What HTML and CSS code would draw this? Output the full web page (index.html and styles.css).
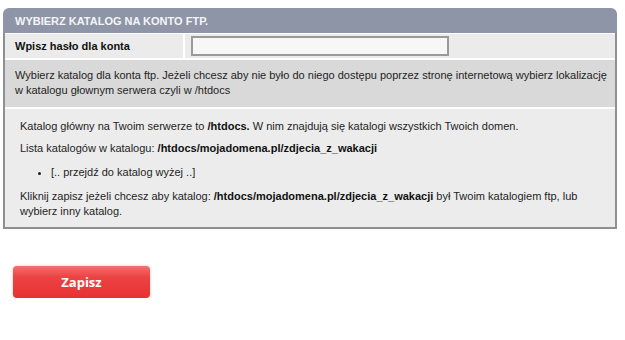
FILE: index.html
```html
<!DOCTYPE html>
<html lang="pl">
<head>
<meta charset="utf-8">
<link rel="stylesheet" href="styles.css">
</head>
<body>
<div class="panel">
  <div class="panel-head">WYBIERZ KATALOG NA KONTO FTP.</div>
  <div class="panel-body">
    <div class="row-pass">
      <div class="cell-label">Wpisz hasło dla konta</div>
      <div class="cell-input"><input class="pass-input" type="text"></div>
    </div>
    <div class="row-info">Wybierz katalog dla konta ftp. Jeżeli chcesz aby nie było do niego dostępu poprzez stronę internetową wybierz lokalizację w katalogu głownym serwera czyli w /htdocs</div>
    <div class="row-dirs">
      <p class="para">Katalog główny na Twoim serwerze to <b>/htdocs.</b> W nim znajdują się katalogi wszystkich Twoich domen.</p>
      <p class="para">Lista katalogów w katalogu: <b>/htdocs/mojadomena.pl/zdjecia_z_wakacji</b></p>
      <ul class="dir-list">
        <li>[.. przejdź do katalog wyżej ..]</li>
      </ul>
      <p class="para para-last">Kliknij zapisz jeżeli chcesz aby katalog: <b>/htdocs/mojadomena.pl/zdjecia_z_wakacji</b> był Twoim katalogiem ftp, lub wybierz inny katalog.</p>
    </div>
  </div>
</div>
<div class="actions">
  <button class="btn-save" type="button">Zapisz</button>
</div>
</body>
</html>
```

FILE: styles.css
```css
html, body {
  margin: 0;
  padding: 0;
  background: #ffffff;
}
body {
  font-family: "Liberation Sans", Arial, sans-serif;
  font-size: 11px;
  color: #1a1a1a;
}
.panel {
  margin: 8px 8px 0 3px;
  width: 614px;
}
.panel-head {
  height: 25px;
  line-height: 26px;
  background: #8e95a6;
  border-radius: 6px 6px 0 0;
  color: #f4f5f8;
  font-weight: bold;
  font-size: 11px;
  padding-left: 12px;
}
.panel-body {
  border: 2px solid #8f8f8f;
  border-top: none;
  background: #ffffff;
  display: flex;
  flex-direction: column;
  gap: 2px;
  padding-top: 1px;
}
.row-pass {
  display: flex;
  gap: 2px;
  height: 24px;
}
.cell-label {
  width: 168px;
  background: #ebebeb;
  font-weight: bold;
  color: #111;
  padding-left: 10px;
  line-height: 24px;
}
.cell-input {
  flex: 1;
  background: #ebebeb;
  display: flex;
  align-items: center;
  padding-left: 6px;
}
.pass-input {
  box-sizing: border-box;
  width: 258px;
  height: 20px;
  border: 2px solid #9a9a9a;
  background: #f7f7f7;
  margin: 0;
  padding: 0;
}
.row-info {
  background: #d9d9d9;
  padding: 8px 2px 9px 10px;
  line-height: 15px;
  color: #1e1e1e;
}
.row-dirs {
  background: #ececec;
  padding: 10px 15px 8px 15px;
  line-height: 15px;
  color: #1e1e1e;
}
.para {
  margin: 0 0 7px 0;
}
.para-last {
  margin-bottom: 0;
}
.para b {
  color: #111;
}
.dir-list {
  margin: 9px 0 9px 0;
  padding-left: 31px;
}
.actions {
  padding: 37px 0 0 13px;
}
.btn-save {
  width: 137px;
  height: 32px;
  border: none;
  border-radius: 4px;
  background: linear-gradient(#f36f6f 0%, #ec4343 35%, #e83131 100%);
  box-shadow: 0 0 3px rgba(232, 60, 60, 0.35);
  color: #ffffff;
  font-family: "Open Sans", "Liberation Sans", sans-serif;
  font-weight: bold;
  font-size: 13px;
  padding: 0;
}
```
